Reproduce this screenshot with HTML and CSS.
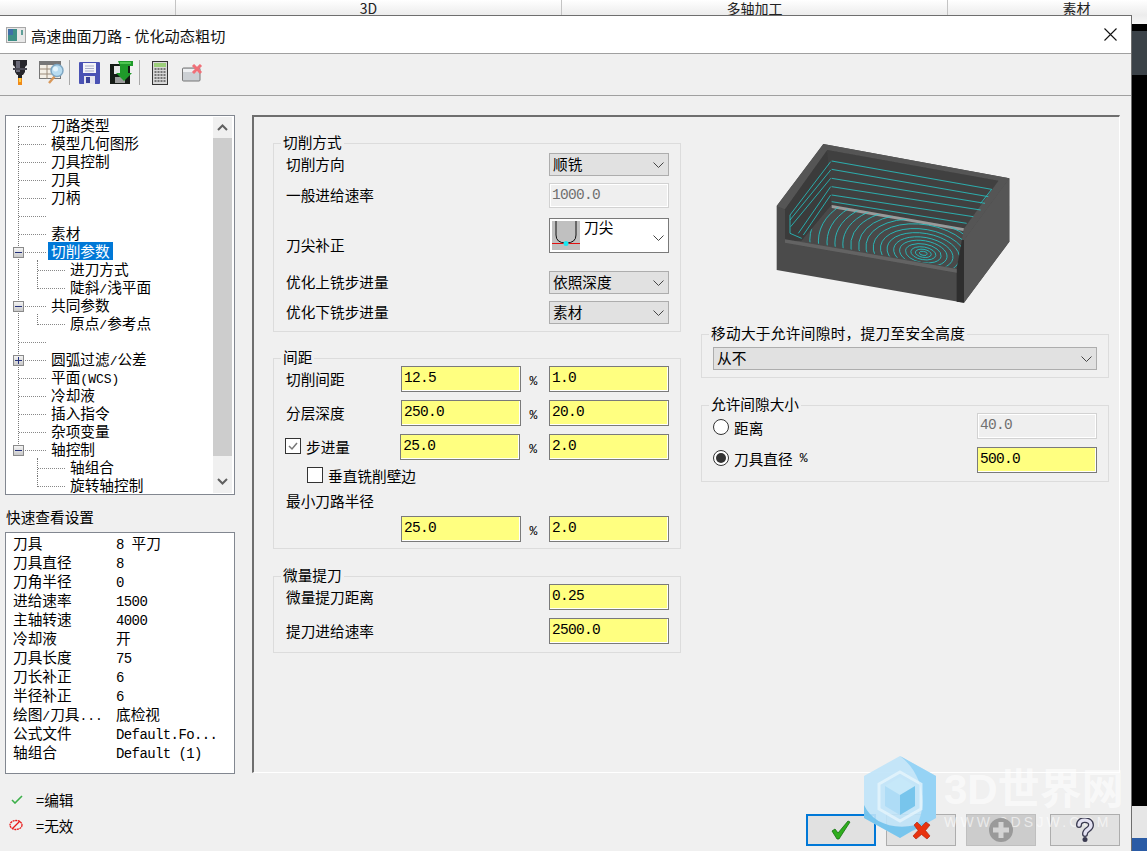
FILE: index.html
```html
<!DOCTYPE html>
<html lang="zh-CN">
<head>
<meta charset="utf-8">
<title>高速曲面刀路 - 优化动态粗切</title>
<link rel="stylesheet" href="styles.css">
</head>
<body>
<div class="tabs">
  <div class="tab t1"></div>
  <div class="tab t2">3D</div>
  <div class="tab t3">多轴加工</div>
  <div class="tab t4">素材</div>
</div>
<div class="main">
  <div class="dialog">
    <div class="titlebar">
      <svg class="win-icon" width="20" height="16" viewBox="0 0 20 16"><rect x=".5" y=".5" width="19" height="15" fill="#e8e8e8" stroke="#a8a8a8"/><rect x="2" y="2" width="9" height="12" fill="#3d8f86"/><rect x="2" y="2" width="5" height="6" fill="#3f6fa8"/><rect x="15" y="3" width="2" height="5" fill="#5f9f98"/></svg>
      <span class="title-text">高速曲面刀路 - 优化动态粗切</span>
      <svg class="close" width="13" height="13" viewBox="0 0 13 13"><path d="M.5.5l12 12M12.5.5l-12 12" stroke="#111" stroke-width="1.1" fill="none"/></svg>
    </div>
    <div class="toolbar">
      <svg class="ti i1" width="14" height="25" viewBox="0 0 14 25"><path d="M0 0h14v5l-2 2v5l-2 3h-6l-2-3v-5l-2-2z" fill="#26262c"/><rect x="3" y="1" width="4" height="11" fill="#6a6a78"/><rect x="0" y="8" width="14" height="2" fill="#4a4a55"/><rect x="5" y="15" width="4" height="3" fill="#222"/><path d="M5 18h4v7h-4z" fill="#f08a18"/><path d="M6 18h2v4h-2z" fill="#ffd040"/></svg>
      <svg class="ti i2" width="25" height="23" viewBox="0 0 25 23"><rect x=".5" y=".5" width="21" height="17" fill="#f4efe6" stroke="#777"/><rect x="1" y="1" width="20" height="3" fill="#777"/><path d="M1 8h20M1 13h20M8 4v14M15 4v14" stroke="#9a8a78" fill="none"/><path d="M10 22l6-7" stroke="#d8985a" stroke-width="2.4" fill="none"/><circle cx="18" cy="9.500" r="6" fill="#b8dcf0" stroke="#7ea6c2" stroke-width="1.500"/><circle cx="16.500" cy="8" r="2.500" fill="#e4f4fc"/></svg>
      <i class="tsep s1"></i>
      <svg class="ti i3" width="21" height="22" viewBox="0 0 21 22"><path d="M1 0h19a1 1 0 0 1 1 1v20a1 1 0 0 1-1 1H1a1 1 0 0 1-1-1V1a1 1 0 0 1 1-1z" fill="#4a52b4"/><rect x="4" y="1" width="13" height="10" fill="#f4f4f8"/><path d="M6 4h9M6 6.500h9M6 9h9" stroke="#a8acc8"/><rect x="5" y="14" width="11" height="8" fill="#e4e4ee"/><rect x="7" y="15" width="4" height="6" fill="#3a4298"/></svg>
      <svg class="ti i4" width="23" height="23" viewBox="0 0 23 23"><rect y="3" width="20" height="20" fill="#141a14"/><rect x="4" y="5" width="10" height="8" fill="#e6e6e6"/><rect x="5" y="16" width="10" height="6" fill="#9a9a9a"/><path d="M8 0h15v5h-5v7h4l-8 8-8-8h4v-7" fill="#1f9a2a"/><path d="M10 2h11" stroke="#5fd45f" stroke-width="1.500"/></svg>
      <i class="tsep s2"></i>
      <svg class="ti i5" width="16" height="24" viewBox="0 0 16 24"><rect x=".5" y=".5" width="15" height="23" fill="#d8d8d8" stroke="#333"/><rect x="2" y="2" width="12" height="4" fill="#9ccf7a"/><path d="M2.500 8h11M2.500 11h11M2.500 14h11M2.500 17h11M2.500 20h11" stroke="#555" stroke-width="1.600" stroke-dasharray="2 1"/></svg>
      <svg class="ti i6" width="21" height="18" viewBox="0 0 21 18"><path d="M.5 5a1 1 0 0 1 1-1h15.500a1 1 0 0 1 1 1v11a1 1 0 0 1-1 1H1.500a1 1 0 0 1-1-1z" fill="#ccd0d4" stroke="#777"/><path d="M1 5h15v3H1z" fill="#eef0f2"/><path d="M11 1l8 8M19 1l-8 8" stroke="#f07078" stroke-width="3"/></svg>
    </div>
    <div class="content">
      <div class="left">
        <div class="tree">
          <div class="tree-body">
            <i class="vline"></i>
            <div class="row">刀路类型</div>
            <div class="row">模型几何图形</div>
            <div class="row">刀具控制</div>
            <div class="row">刀具</div>
            <div class="row">刀柄</div>
            <div class="row"></div>
            <div class="row">素材</div>
            <div class="row"><i class="exp"></i><span class="sel">切削参数</span></div>
            <div class="row child">进刀方式</div>
            <div class="row child last">陡斜<span class="hw">/</span>浅平面</div>
            <div class="row"><i class="exp"></i>共同参数</div>
            <div class="row child last">原点<span class="hw">/</span>参考点</div>
            <div class="row"></div>
            <div class="row"><i class="exp plus"></i>圆弧过滤<span class="hw">/</span>公差</div>
            <div class="row">平面<span class="hw">(WCS)</span></div>
            <div class="row">冷却液</div>
            <div class="row">插入指令</div>
            <div class="row">杂项变量</div>
            <div class="row"><i class="exp"></i>轴控制</div>
            <div class="row child">轴组合</div>
            <div class="row child last">旋转轴控制</div>
          </div>
          <div class="scroll">
            <div class="sbtn"><svg width="11" height="7" viewBox="0 0 11 7"><path d="M1 6l4.500-4.500L10 6" stroke="#606060" stroke-width="2" fill="none"/></svg></div>
            <div class="thumb"></div>
            <div class="sbtn bottom"><svg width="11" height="7" viewBox="0 0 11 7"><path d="M1 1l4.500 4.500L10 1" stroke="#606060" stroke-width="2" fill="none"/></svg></div>
          </div>
        </div>
        <div class="quick-label">快速查看设置</div>
        <div class="quick">
          <span>刀具</span><span class="v">8 <em>平刀</em></span>
          <span>刀具直径</span><span class="v">8</span>
          <span>刀角半径</span><span class="v">0</span>
          <span>进给速率</span><span class="v">1500</span>
          <span>主轴转速</span><span class="v">4000</span>
          <span>冷却液</span><span class="v"><em>开</em></span>
          <span>刀具长度</span><span class="v">75</span>
          <span>刀长补正</span><span class="v">6</span>
          <span>半径补正</span><span class="v">6</span>
          <span>绘图<span class="hw">/</span>刀具<span class="hw">...</span></span><span class="v"><em>底检视</em></span>
          <span>公式文件</span><span class="v">Default.Fo...</span>
          <span>轴组合</span><span class="v">Default (1)</span>
        </div>
        <div class="key">
          <svg width="12" height="9" viewBox="0 0 12 9"><path d="M1 5l3 3 7-7" stroke="#3cb04a" stroke-width="1.600" fill="none"/></svg>
          <span>=编辑</span>
        </div>
        <div class="key k2">
          <svg width="14" height="12" viewBox="0 0 14 12"><ellipse cx="7" cy="6" rx="6" ry="4.500" fill="none" stroke="#e81818" stroke-width="1.300" stroke-dasharray="2 .6"/><path d="M3 10l8-8" stroke="#e81818" stroke-width="1.300"/></svg>
          <span>=无效</span>
        </div>
      </div>

      <div class="panel">
        <div class="col col-l">
          <div class="group g1">
            <div class="legend">切削方式</div>
            <div class="fr">
              <span>切削方向</span>
              <div class="sel-box">顺铣<svg class="chev" width="11" height="6" viewBox="0 0 11 6"><path d="M.5.500l5 5 5-5" stroke="#444" fill="none"/></svg></div>
            </div>
            <div class="fr m7">
              <span>一般进给速率</span>
              <div class="inp off">1000.0</div>
            </div>
            <div class="fr m10 fr-end">
              <span class="lb-low">刀尖补正</span>
              <div class="sel-box tall">
                <svg class="tip" width="28" height="29" viewBox="0 0 28 29"><rect width="28" height="29" fill="#c0c0c0"/><path d="M4 0v14q0 8 10 8t10-8V0" stroke="#111" fill="none"/><path d="M0 22.500h28" stroke="#e01010"/><circle cx="14" cy="22.500" r="2.500" fill="#18e8f0"/></svg>
                <span class="tip-text">刀尖</span>
                <svg class="chev" width="11" height="6" viewBox="0 0 11 6"><path d="M.5.500l5 5 5-5" stroke="#444" fill="none"/></svg>
              </div>
            </div>
            <div class="fr m18">
              <span>优化上铣步进量</span>
              <div class="sel-box">依照深度<svg class="chev" width="11" height="6" viewBox="0 0 11 6"><path d="M.5.500l5 5 5-5" stroke="#444" fill="none"/></svg></div>
            </div>
            <div class="fr m7">
              <span>优化下铣步进量</span>
              <div class="sel-box">素材<svg class="chev" width="11" height="6" viewBox="0 0 11 6"><path d="M.5.500l5 5 5-5" stroke="#444" fill="none"/></svg></div>
            </div>
          </div>

          <div class="group g2">
            <div class="legend">间距</div>
            <div class="fr">
              <span class="lb">切削间距</span>
              <div class="inp">12.5</div><span class="pct">%</span><div class="inp">1.0</div>
            </div>
            <div class="fr m8">
              <span class="lb">分层深度</span>
              <div class="inp">250.0</div><span class="pct">%</span><div class="inp">20.0</div>
            </div>
            <div class="fr m8">
              <span class="lb check-l"><i class="cb on"><svg width="14" height="14" viewBox="0 0 14 14"><path d="M3 7l3 3 5-6" stroke="#777" stroke-width="1.500" fill="none"/></svg></i>步进量</span>
              <div class="inp">25.0</div><span class="pct">%</span><div class="inp">2.0</div>
            </div>
            <div class="chk-row"><i class="cb"></i>垂直铣削壁边</div>
            <div class="min-label">最小刀路半径</div>
            <div class="fr m5">
              <span class="lb"></span>
              <div class="inp">25.0</div><span class="pct">%</span><div class="inp">2.0</div>
            </div>
          </div>

          <div class="group g3">
            <div class="legend">微量提刀</div>
            <div class="fr">
              <span>微量提刀距离</span>
              <div class="inp">0.25</div>
            </div>
            <div class="fr m8">
              <span>提刀进给速率</span>
              <div class="inp">2500.0</div>
            </div>
          </div>
        </div>

        <div class="col col-r">
          <svg class="model" width="280" height="200" viewBox="0 0 840 600">
            <defs>
              <clipPath id="floor"><path d="M275 258L672 328 650 445 185 362z"/></clipPath>
              <filter id="soft"><feGaussianBlur stdDeviation="1.200"/></filter>
            </defs>
            <g filter="url(#soft)">
              <path d="M110 258L250 72 808 175V365L672 548 110 450z" fill="#4b4b4b"/>
              <path d="M672 360L808 175V365L672 548z" fill="#565656"/>
              <path d="M650 360h22V548L650 545z" fill="#2f2f2f"/>
              <path d="M110 258L250 72 808 175 672 360 650 358 775 182 262 90 135 268z" fill="#555"/>
              <path d="M262 90L775 182 672 325 275 255z" fill="#414141"/>
              <path d="M262 90L275 255 185 362H135V268z" fill="#3a3a3a"/>
              <path d="M275 255L672 325 650 445 185 362z" fill="#484848"/>
              <path d="M275 255L672 325 670 333 275 264z" fill="#9a9a9a"/>
              <path d="M135 358L650 447V458L135 368z" fill="#646464"/>
              <g fill="none" stroke="#26c8c8" stroke-width="2.400">
                <path d="M275 123L755 208 722 250M275 148L745 230M275 175L735 250M275 200L722 270M275 225L700 290M275 245L680 310"/>
                <path d="M272 125L150 285V340L185 355M272 150L150 300M272 175L152 320M272 200L175 340M272 225L190 345"/>
                <g clip-path="url(#floor)">
                  <g transform="rotate(10 550 400)">
                    <ellipse cx="550" cy="400" rx="12" ry="6"/><ellipse cx="550" cy="400" rx="24" ry="12"/><ellipse cx="550" cy="400" rx="38" ry="19"/><ellipse cx="550" cy="400" rx="54" ry="28"/><ellipse cx="550" cy="400" rx="72" ry="38"/><ellipse cx="550" cy="400" rx="90" ry="48"/><ellipse cx="550" cy="400" rx="110" ry="60"/><ellipse cx="550" cy="400" rx="130" ry="72"/><ellipse cx="550" cy="400" rx="152" ry="86"/><ellipse cx="550" cy="400" rx="174" ry="100"/><ellipse cx="550" cy="400" rx="196" ry="114"/><ellipse cx="550" cy="400" rx="220" ry="128"/><ellipse cx="550" cy="400" rx="244" ry="142"/><ellipse cx="550" cy="400" rx="268" ry="156"/><ellipse cx="550" cy="400" rx="292" ry="170"/><ellipse cx="550" cy="400" rx="318" ry="184"/><ellipse cx="550" cy="400" rx="344" ry="198"/><ellipse cx="550" cy="400" rx="372" ry="212"/>
                  </g>
                </g>
              </g>
            </g>
          </svg>
          <div class="group g4">
            <div class="legend">移动大于允许间隙时，提刀至安全高度</div>
            <div class="sel-box wide">从不<svg class="chev" width="11" height="6" viewBox="0 0 11 6"><path d="M.5.500l5 5 5-5" stroke="#444" fill="none"/></svg></div>
          </div>
          <div class="group g5">
            <div class="legend">允许间隙大小</div>
            <div class="fr">
              <span class="radio-l"><i class="rb"></i>距离</span>
              <div class="inp off">40.0</div>
            </div>
            <div class="fr m8">
              <span class="radio-l up"><i class="rb on"></i>刀具直径<span class="pct inl">%</span></span>
              <div class="inp">500.0</div>
            </div>
          </div>
        </div>
      </div>

      <div class="buttons">
        <div class="btn ok"><svg width="20" height="20" viewBox="0 0 20 20"><path d="M1 11l3-2 3 4L17 1l2 1L8 19H6z" fill="#2fae1e" stroke="#14700f" stroke-width=".8"/></svg></div>
        <div class="btn"><svg width="19" height="19" viewBox="0 0 19 19"><path d="M2 4l3-3 4.500 4.500L14 1l4 3-4.500 5.500L18 15l-3 3-5.500-4.500L4 18l-3-3 5-5.500z" fill="#e8330f" stroke="#a82008" stroke-width=".6"/></svg></div>
        <div class="btn dis"><svg width="24" height="24" viewBox="0 0 24 24"><circle cx="12" cy="12" r="12" fill="#9a9a9a"/><path d="M12 4v16M4 12h16" stroke="#d4d4d4" stroke-width="5"/></svg></div>
        <div class="btn help"><svg width="20" height="24" viewBox="0 0 20 24"><g fill="none" stroke-linecap="round"><path d="M4 7c0-7 12-6 12 0 0 5-6 4-6 9" stroke="#3a3a50" stroke-width="6"/><path d="M4 7c0-7 12-6 12 0 0 5-6 4-6 9" stroke="#e4e2f2" stroke-width="3.400"/></g><circle cx="10" cy="21.500" r="2.500" fill="#3a3a50"/></svg></div>
      </div>
    </div>
  </div>
  <div class="side">
    <div class="s-light"></div>
    <div class="s-black"></div>
    <div class="s-dark"></div>
    <div class="s-fill"></div>
    <div class="s-light2"></div>
    <div class="s-blue"></div>
  </div>
</div>

<div class="wm">
  <svg class="wm-hex" width="74" height="84" viewBox="0 0 74 84">
    <path d="M37 1L73 21V63L37 83 1 63V21z" fill="#bfe3f8" fill-opacity=".9"/>
    <path d="M37 1L73 21V63L50 76C66 55 62 20 37 1z" fill="#93d2f4" fill-opacity=".95"/>
    <path d="M1 50C10 70 36 78 66 66L37 83 1 63z" fill="#74c3ec" fill-opacity=".95"/>
    <path d="M37 17L58 29V54L37 66 16 54V29z" fill="none" stroke="#e8f5fc" stroke-opacity=".75" stroke-width="3"/>
    <path d="M37 22L52 31 37 40 22 31z" fill="#c6e8f9"/>
    <path d="M22 31L37 40V60L22 51z" fill="#aedcf6"/>
    <path d="M52 31L37 40V60L52 51z" fill="#78c5ec"/>
  </svg>
  <div class="wm-text">
    <div class="wm-big">3D世界网</div>
    <div class="wm-small">WWW.3DSJW.COM</div>
  </div>
</div>
</body>
</html>
```
FILE: styles.css
```css
* { box-sizing: border-box; }
html, body { margin: 0; padding: 0; }
body {
  width: 1147px;
  height: 851px;
  overflow: hidden;
  display: flex;
  flex-direction: column;
  position: relative;
  background: #f0f0f0;
  color: #000;
  font-family: "Noto Sans CJK SC", "Liberation Sans", sans-serif;
  font-size: 14.67px;
}
i, em { font-style: normal; }
.hw { font-family: "Liberation Mono", monospace; font-size: 13px; }

/* app strip behind the dialog */
.tabs {
  height: 15px;
  flex: none;
  display: flex;
  overflow: hidden;
  background: linear-gradient(#ffffff, #ececec);
  font-size: 14px;
  line-height: 17px;
  color: #222;
}
.tab { text-align: center; border-right: 1px solid #c4c4c4; }
.t1 { width: 176px; }
.t2 { width: 386px; }
.t3 { width: 386px; }
.t4 { flex: 1; border-right: 0; padding-left: 58px; }

.main { flex: 1; display: flex; min-height: 0; }
.dialog {
  width: 1132px;
  display: flex;
  flex-direction: column;
  border-top: 1px solid #6e6e6e;
  border-right: 1px solid #6e6e6e;
  background: #f0f0f0;
}
.titlebar {
  flex: none;
  background: #fff;
  display: flex;
  align-items: center;
  padding-left: 6px;
  border-bottom: 1px solid #a0a0a0;
  height: 38px;
}
.title-text { margin-left: 5px; font-size: 15.2px; color: #111; }
.close { margin-left: auto; margin-right: 14px; }

.toolbar {
  height: 42px;
  flex: none;
  display: flex;
  align-items: flex-start;
  border-bottom: 1px solid #a0a0a0;
  padding-left: 13px;
}
.ti { flex: none; display: block; }
.i1 { margin-top: 6px; }
.i2 { margin-top: 7px; margin-left: 12px; }
.tsep { width: 1px; height: 25px; margin-top: 6px; background: #a8a8a8; flex: none; }
.s1 { margin-left: 5px; }
.i3 { margin-top: 8px; margin-left: 9px; }
.i4 { margin-top: 7px; margin-left: 10px; }
.s2 { margin-left: 6px; }
.i5 { margin-top: 7px; margin-left: 12px; }
.i6 { margin-top: 10px; margin-left: 14px; }

.content {
  flex: 1;
  min-height: 0;
  display: grid;
  grid-template-columns: 230px 868px;
  grid-template-rows: 658px 1fr;
  column-gap: 17px;
  padding: 19px 0 0 5px;
}

/* left column */
.left { grid-row: 1 / span 2; display: flex; flex-direction: column; min-width: 0; }
.tree {
  height: 380px;
  flex: none;
  border: 1px solid #828790;
  background: #fff;
  display: flex;
  padding-right: 2px;
}
.tree-body { flex: 1; position: relative; min-width: 0; }
.vline {
  position: absolute;
  left: 12px;
  top: 10px;
  height: 324px;
  border-left: 1px dotted #777;
}
.row {
  height: 18px;
  line-height: 17px;
  padding-left: 45px;
  position: relative;
  white-space: nowrap;
}
.row::before {
  content: "";
  position: absolute;
  left: 13px;
  top: 10px;
  width: 27px;
  border-top: 1px dotted #888;
}
.child { padding-left: 64px; }
.child::before { left: 32px; }
.child::after {
  content: "";
  position: absolute;
  left: 31px;
  top: 0;
  height: 18px;
  border-left: 1px dotted #777;
}
.child.last::after { height: 11px; }
.exp {
  position: absolute;
  left: 7px;
  top: 5px;
  width: 11px;
  height: 11px;
  border: 1px solid #8a8a8a;
  background: linear-gradient(#f4f4f4, #c8c8c8);
  z-index: 1;
}
.exp::before {
  content: "";
  position: absolute;
  left: 1px;
  top: 4px;
  width: 7px;
  height: 1px;
  background: #23307a;
}
.exp.plus::after {
  content: "";
  position: absolute;
  left: 4px;
  top: 1px;
  width: 1px;
  height: 7px;
  background: #23307a;
}
.sel {
  display: inline-block;
  margin-left: -3px;
  padding: 0 3px;
  height: 18px;
  background: #0078d7;
  color: #fff;
}
.scroll {
  width: 19px;
  flex: none;
  margin: 1px 0;
  background: #f0f0f0;
  display: flex;
  flex-direction: column;
}
.sbtn { height: 21px; flex: none; display: flex; justify-content: center; align-items: center; }
.bottom { margin-top: auto; height: 24px; }
.thumb { height: 318px; flex: none; background: #cdcdcd; }

.quick-label { margin: 11px 0 5px 1px; line-height: 21px; }
.quick {
  height: 242px;
  flex: none;
  border: 1px solid #828790;
  background: #fff;
  padding: 1px 0 0 7px;
  display: grid;
  grid-template-columns: 103px 1fr;
  grid-auto-rows: 19px;
  align-items: baseline;
  line-height: 17px;
  white-space: nowrap;
}
.v {
  font-family: "Liberation Mono", "Noto Sans CJK SC", monospace;
  font-size: 14px;
  letter-spacing: -0.6px;
}
.v em { font-family: "Noto Sans CJK SC", sans-serif; font-size: 14.67px; letter-spacing: 0; }
.key { display: flex; align-items: center; height: 20px; margin-top: 15px; padding-left: 5px; }
.key svg { flex: none; width: 14px; }
.key span { margin-left: 12px; }
.k2 { margin-top: 6px; padding-left: 4px; }
.k2 span { margin-left: 13px; }

/* right panel */
.panel {
  border: 1px solid #fff;
  border-left: 2px solid #6e6e6e;
  border-top: 2px solid #6e6e6e;
  display: grid;
  grid-template-columns: 408px 408px;
  column-gap: 20px;
  padding-left: 19px;
  align-content: start;
}
.col { display: flex; flex-direction: column; }
.col-l { padding-top: 26px; }
.group {
  border: 1px solid #dcdcdc;
  position: relative;
  padding: 7px 11px 0 12px;
  flex: none;
}
.legend {
  position: absolute;
  left: 7px;
  top: -13px;
  padding: 0 2px;
  background: #f0f0f0;
  line-height: 21px;
  white-space: nowrap;
}
.g1 { height: 189px; padding-top: 9px; }
.g2 { height: 191px; margin-top: 26px; }
.g3 { height: 77px; margin-top: 27px; }
.g4 { height: 44px; margin-top: 14px; padding: 12px 11px 0 11px; }
.g4 .legend { letter-spacing: 0.3px; }
.g5 { height: 77px; margin-top: 27px; padding-left: 11px; }

.fr { display: flex; align-items: center; justify-content: space-between; }
.fr > span:first-child { margin-top: -2px; }
.fr-end { align-items: flex-end; }
.m5 { margin-top: 5px; }
.m7 { margin-top: 7px; }
.m8 { margin-top: 8px; }
.m10 { margin-top: 10px; }
.m18 { margin-top: 18px; }
.lb { width: 115px; flex: none; }
.fr > .lb-low { line-height: 20px; margin-bottom: -2px; margin-top: 0; }
.pct {
  width: 28px;
  flex: none;
  text-align: center;
  font-family: "Liberation Mono", monospace;
  font-size: 13px;
  padding: 4px 3px 0 0;
}
.pct.inl { width: auto; padding: 0 0 0 7px; }

.inp {
  width: 120px;
  height: 26px;
  flex: none;
  background: #ffff80;
  border: 1px solid #7a7a7a;
  box-shadow: inset -1px -1px 0 #fff;
  padding-left: 2px;
  font-family: "Liberation Mono", monospace;
  font-size: 14.5px;
  letter-spacing: -0.7px;
  line-height: 23px;
}
.inp.off {
  background: #efefef;
  border-color: #d2d2d2;
  box-shadow: inset 0 0 0 1px #fff;
  color: #707070;
}
.g1 .inp.off { height: 25px; }

.sel-box {
  width: 120px;
  height: 23px;
  flex: none;
  background: #e1e1e1;
  border: 1px solid #adadad;
  padding-left: 3px;
  line-height: 20px;
  position: relative;
}
.chev { position: absolute; right: 4px; top: 8px; }
.sel-box.wide { width: 384px; }
.sel-box.tall {
  height: 35px;
  background: #fff;
  border-color: #7a7a7a;
  padding: 2px 0 0 2px;
  display: flex;
  align-items: flex-start;
}
.tall .chev { top: 16px; }
.tip { flex: none; }
.tip-text { margin: -2px 0 0 4px; line-height: 16px; }

.check-l, .radio-l { display: flex; align-items: center; white-space: nowrap; margin-left: -1px; }
.cb {
  width: 16px;
  height: 16px;
  flex: none;
  border: 1px solid #333;
  background: #fff;
  display: block;
  margin-right: 5px;
}
.cb svg { display: block; margin: 0; }
.chk-row { display: flex; align-items: center; height: 18px; margin: 6px 0 0 21px; white-space: nowrap; }
.min-label { margin-top: 7px; line-height: 20px; }

.rb {
  width: 16px;
  height: 16px;
  flex: none;
  border-radius: 50%;
  border: 1px solid #333;
  background: #fff;
  margin-right: 5px;
  position: relative;
  display: block;
}
.rb.on::after {
  content: "";
  position: absolute;
  left: 2px;
  top: 2px;
  width: 10px;
  height: 10px;
  border-radius: 50%;
  background: #333;
}
.fr > .radio-l { margin-left: 0; margin-top: 0; padding-top: 4px; }
.fr > .radio-l.up { padding-top: 0; margin-top: -4px; }
.model { display: block; margin: 3px 0 0 39px; flex: none; }

.buttons {
  grid-column: 2;
  display: flex;
  justify-content: flex-end;
  align-items: flex-start;
  padding: 41px 0 0 0;
  column-gap: 10px;
}
.btn {
  width: 70px;
  height: 32px;
  flex: none;
  background: #e1e1e1;
  border: 1px solid #adadad;
  display: flex;
  align-items: center;
  justify-content: center;
}
.btn svg { position: relative; z-index: 2; }
.ok { border: 2px solid #0078d7; }
.dis { background: #cccccc; border-color: #bfbfbf; }
.help { margin-left: 4px; }

/* background to the right of the dialog */
.side { flex: 1; display: flex; flex-direction: column; }
.s-light { height: 9px; background: linear-gradient(#ececec, #f6f6f6); }
.s-black { height: 7px; background: #000; }
.s-dark { height: 44px; background: #3b4248; }
.s-fill { flex: 1; background: #000; }
.s-light2 { height: 32px; background: #e6e6e6; }
.s-blue { height: 13px; background: #2a5ba5; }

/* watermark over the dialog */
.wm {
  position: absolute;
  left: 863px;
  top: 755px;
  display: flex;
  z-index: 1;
  pointer-events: none;
}
.wm-hex { flex: none; display: block; }
.wm-text { margin-left: 7px; }
.wm-big {
  font-family: "Liberation Sans", "Noto Sans CJK SC", sans-serif;
  font-weight: 700;
  font-size: 42px;
  line-height: 48px;
  margin-top: 11px;
  color: rgba(255, 255, 255, 0.6);
  white-space: nowrap;
}
.wm-small {
  font-family: "Liberation Sans", sans-serif;
  font-size: 14px;
  letter-spacing: 3.2px;
  line-height: 16px;
  color: rgba(255, 255, 255, 0.6);
  white-space: nowrap;
}
```
